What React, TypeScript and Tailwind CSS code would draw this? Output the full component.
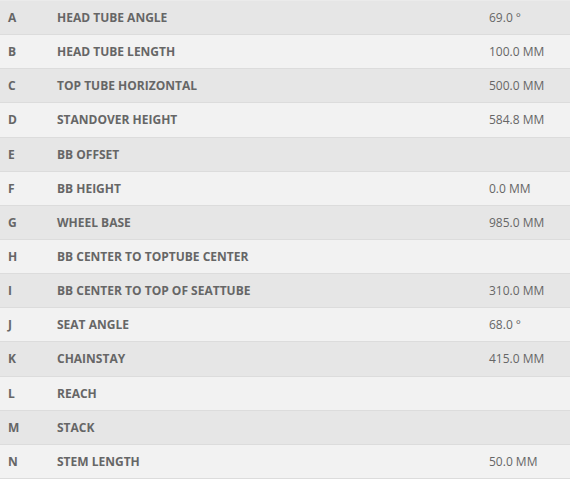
const rows: [string, string, string][] = [
  ["A", "HEAD TUBE ANGLE", "69.0 °"],
  ["B", "HEAD TUBE LENGTH", "100.0 MM"],
  ["C", "TOP TUBE HORIZONTAL", "500.0 MM"],
  ["D", "STANDOVER HEIGHT", "584.8 MM"],
  ["E", "BB OFFSET", ""],
  ["F", "BB HEIGHT", "0.0 MM"],
  ["G", "WHEEL BASE", "985.0 MM"],
  ["H", "BB CENTER TO TOPTUBE CENTER", ""],
  ["I", "BB CENTER TO TOP OF SEATTUBE", "310.0 MM"],
  ["J", "SEAT ANGLE", "68.0 °"],
  ["K", "CHAINSTAY", "415.0 MM"],
  ["L", "REACH", ""],
  ["M", "STACK", ""],
  ["N", "STEM LENGTH", "50.0 MM"],
];

export default function App() {
  return (
    <div className="w-[570px] bg-white font-['Open_Sans',sans-serif] text-[12px] leading-[1.428571] text-[#666]">
      <div className="border-b border-[#dcdcdc]">
        {rows.map(([key, name, value], i) => (
          <div
            key={key}
            className={`grid grid-cols-[57px_1fr_81px] border-t py-2 ${
              i === 0 ? "border-[#ebebeb]" : "border-[#dcdcdc]"
            } ${i % 2 === 0 ? "bg-[#e6e6e6]" : "bg-[#f2f2f2]"}`}
          >
            <span className="pl-2 font-bold">{key}</span>
            <span className="font-bold">{name}</span>
            <span>{value || "\u00a0"}</span>
          </div>
        ))}
      </div>
    </div>
  );
}
